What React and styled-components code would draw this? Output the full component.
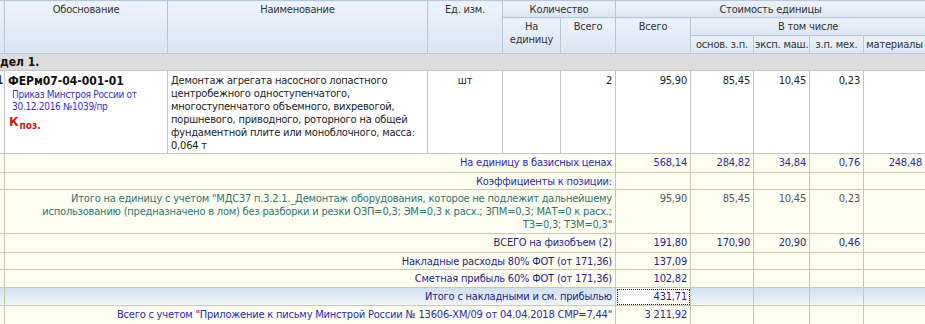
import React from 'react';
import styled, { createGlobalStyle, css } from 'styled-components';

const GlobalStyle = createGlobalStyle`
  html, body {
    margin: 0;
    padding: 0;
    background: #ffffff;
  }
  body {
    font-family: "DejaVu Sans Condensed", "DejaVu Sans", Tahoma, sans-serif;
    font-size: 11px;
    color: #222;
  }
`;

const Viewport = styled.div`
  width: 925px;
  height: 324px;
  overflow: hidden;
`;

const Grid = styled.table`
  margin-left: -26px;
  border-collapse: collapse;
  table-layout: fixed;
  width: 951px;
  font-size: 11px;
  line-height: 13px;
  letter-spacing: -0.2px;
`;

const HeadRow = styled.tr`
  height: ${p => p.$h}px;
`;

const HeadCell = styled.th`
  font-weight: normal;
  color: #333;
  padding: 2px 1px 0;
  vertical-align: top;
  text-align: center;
  white-space: nowrap;
  overflow: hidden;
  border: 1px solid #b7c8db;
  background: linear-gradient(#eef3fa, #dae5f2);
`;

const SectionRow = styled.tr`
  height: 17px;
  background: #dcdcdc;
`;

const SectionCell = styled.td`
  padding: 0 0 0 4px;
  font-weight: bold;
  font-size: 12px;
  letter-spacing: 0;
  color: #111;
  border-top: 1px solid #c4c4c4;
  border-bottom: 1px solid #c4c4c4;
`;

const Cell = styled.td`
  border: 1px solid #c4c4c4;
  padding: ${p => p.$pad || '2px 3px 0'};
  vertical-align: top;
  text-align: ${p => p.$align || 'right'};
  white-space: nowrap;
  overflow: hidden;
`;

const MainRow = styled.tr`
  height: 83px;
  background: #ffffff;
  color: #222;
`;

const Num = styled(Cell)`
  font-weight: bold;
  font-size: 12px;
  padding: 3px 1px 0;
`;

const Code = styled.div`
  font-weight: bold;
  font-size: 12px;
  line-height: 14px;
  letter-spacing: 0;
  color: #111;
`;

const Order = styled.div`
  margin: 1px 0 0 4px;
  font-size: 10px;
  line-height: 12px;
  letter-spacing: -0.3px;
  color: #3535c8;
`;

const Factor = styled.div`
  margin: 2px 0 0 1px;
  color: #e01010;
  font-weight: bold;
  font-size: 13px;
  letter-spacing: 0;
  sub {
    font-size: 10px;
    vertical-align: -3px;
    margin-left: 1px;
  }
`;

const tones = {
  blue: '#2a2ab0',
  navy: '#1e1e8e',
  teal: '#2b7676',
  gray: '#4d5858',
};

const SumRow = styled.tr`
  height: ${p => p.$h}px;
  color: ${p => tones[p.$tone] || tones.navy};
  ${p =>
    p.$accent
      ? css`
          background: linear-gradient(#cfe0ee, #f3f8fb);
        `
      : css`
          background: #fefef0;
        `}
`;

const SumCell = styled(Cell)`
  border-color: #c8c8b4;
  color: ${p => (p.$tone ? tones[p.$tone] : 'inherit')};
`;

const Focus = styled(SumCell)`
  background: #ffffff;
  outline: 1px dotted #222;
  outline-offset: -2px;
`;

const Values = ({ items, tone }) =>
  items.map((v, i) => (
    <SumCell key={i} $tone={tone}>
      {v}
    </SumCell>
  ));

const SumLine = ({ label, tone, h, values, accent }) => (
  <SumRow $tone={tone} $h={h} $accent={accent}>
    <SumCell></SumCell>
    <SumCell colSpan={5}>{label}</SumCell>
    <Values items={values} />
  </SumRow>
);

export default function App() {
  return (
    <>
      <GlobalStyle />
      <Viewport>
        <Grid>
          <colgroup>
            <col style={{ width: 30 }} />
            <col style={{ width: 163 }} />
            <col style={{ width: 260 }} />
            <col style={{ width: 75 }} />
            <col style={{ width: 58 }} />
            <col style={{ width: 55 }} />
            <col style={{ width: 75 }} />
            <col style={{ width: 63 }} />
            <col style={{ width: 56 }} />
            <col style={{ width: 54 }} />
            <col style={{ width: 62 }} />
          </colgroup>
          <thead>
            <HeadRow $h={17}>
              <HeadCell rowSpan={3}></HeadCell>
              <HeadCell rowSpan={3}>Обоснование</HeadCell>
              <HeadCell rowSpan={3}>Наименование</HeadCell>
              <HeadCell rowSpan={3}>Ед. изм.</HeadCell>
              <HeadCell colSpan={2}>Количество</HeadCell>
              <HeadCell colSpan={5}>Стоимость единицы</HeadCell>
            </HeadRow>
            <HeadRow $h={18}>
              <HeadCell rowSpan={2}>На<br />единицу</HeadCell>
              <HeadCell rowSpan={2}>Всего</HeadCell>
              <HeadCell rowSpan={2}>Всего</HeadCell>
              <HeadCell colSpan={4}>В том числе</HeadCell>
            </HeadRow>
            <HeadRow $h={18}>
              <HeadCell>основ. з.п.</HeadCell>
              <HeadCell>эксп. маш.</HeadCell>
              <HeadCell>з.п. мех.</HeadCell>
              <HeadCell>материалы</HeadCell>
            </HeadRow>
          </thead>
          <tbody>
            <SectionRow>
              <SectionCell colSpan={11}>Раздел 1.</SectionCell>
            </SectionRow>
            <MainRow>
              <Num>1</Num>
              <Cell $align="left" $pad="3px 3px 0">
                <Code>ФЕРм07-04-001-01</Code>
                <Order>Приказ Минстроя России от<br />30.12.2016 №1039/пр</Order>
                <Factor>К<sub>поз.</sub></Factor>
              </Cell>
              <Cell $align="left" $pad="3px 3px 0">
                Демонтаж агрегата насосного лопастного<br />
                центробежного одноступенчатого,<br />
                многоступенчатого объемного, вихревогой,<br />
                поршневого, приводного, роторного на общей<br />
                фундаментной плите или моноблочного, масса:<br />
                0,064 т
              </Cell>
              <Cell $align="center" $pad="3px 3px 0">шт</Cell>
              <Cell $pad="3px 3px 0"></Cell>
              <Cell $pad="3px 3px 0">2</Cell>
              <Cell $pad="3px 3px 0">95,90</Cell>
              <Cell $pad="3px 3px 0">85,45</Cell>
              <Cell $pad="3px 3px 0">10,45</Cell>
              <Cell $pad="3px 3px 0">0,23</Cell>
              <Cell $pad="3px 3px 0"></Cell>
            </MainRow>
            <SumLine
              label="На единицу в базисных ценах"
              tone="blue"
              h={19}
              values={['568,14', '284,82', '34,84', '0,76', '248,48']}
            />
            <SumLine label="Коэффициенты к позиции:" tone="blue" h={17} values={['', '', '', '', '']} />
            <SumRow $tone="teal" $h={44}>
              <SumCell></SumCell>
              <SumCell colSpan={5}>
                Итого на единицу с учетом "МДС37 п.3.2.1._Демонтаж оборудования, которое не подлежит дальнейшему<br />
                использованию (предназначено в лом) без разборки и резки ОЗП=0,3; ЭМ=0,3 к расх.; ЗПМ=0,3; МАТ=0 к расх.;<br />
                ТЗ=0,3; ТЗМ=0,3"
              </SumCell>
              <Values items={['95,90', '85,45', '10,45', '0,23', '']} tone="gray" />
            </SumRow>
            <SumLine
              label="ВСЕГО на физобъем (2)"
              tone="navy"
              h={19}
              values={['191,80', '170,90', '20,90', '0,46', '']}
            />
            <SumLine
              label="Накладные расходы 80% ФОТ (от 171,36)"
              tone="navy"
              h={17}
              values={['137,09', '', '', '', '']}
            />
            <SumLine
              label="Сметная прибыль 60% ФОТ (от 171,36)"
              tone="navy"
              h={18}
              values={['102,82', '', '', '', '']}
            />
            <SumRow $tone="navy" $h={18} $accent>
              <SumCell></SumCell>
              <SumCell colSpan={5}>Итого с накладными и см. прибылью</SumCell>
              <Focus>431,71</Focus>
              <Values items={['', '', '', '']} />
            </SumRow>
            <SumLine
              label={'Всего с учетом "Приложение к письму Минстрой России № 13606-ХМ/09 от 04.04.2018 СМР=7,44"'}
              tone="blue"
              h={19}
              values={['3 211,92', '', '', '', '']}
            />
          </tbody>
        </Grid>
      </Viewport>
    </>
  );
}
